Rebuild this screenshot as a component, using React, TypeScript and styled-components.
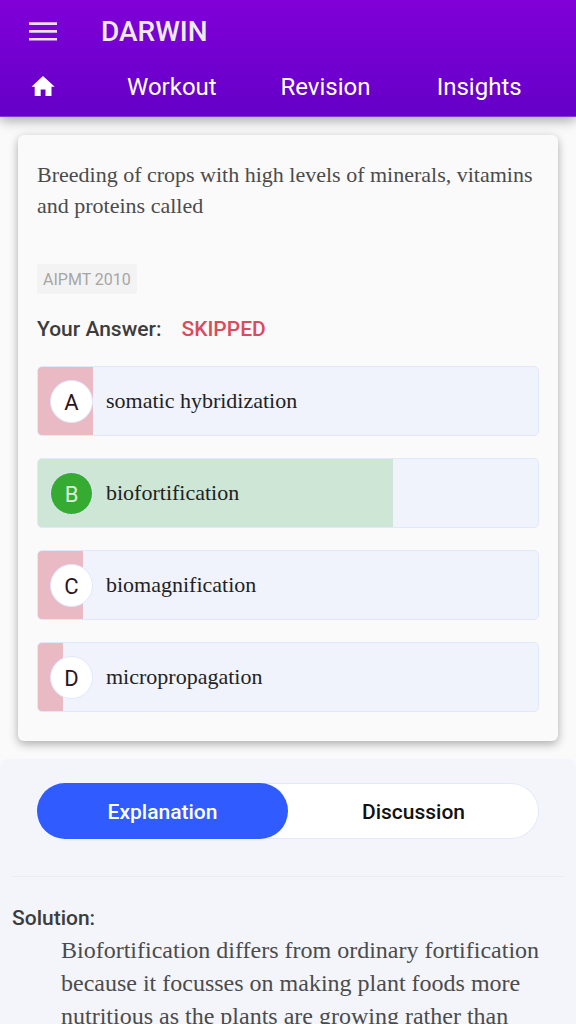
import React, { useState } from "react";
import styled, { createGlobalStyle } from "styled-components";

const GlobalStyle = createGlobalStyle`
  *, *::before, *::after { box-sizing: border-box; }
  body {
    margin: 0;
    background: #fafafa;
    color: #3c3c3c;
    font-family: Roboto, "Liberation Sans", sans-serif;
  }
  button { font-family: inherit; cursor: pointer; }
`;

const sans = `Roboto, "Liberation Sans", sans-serif`;
const serif = `"Liberation Serif", "Times New Roman", serif`;

const Shell = styled.div`
  display: flex;
  flex-direction: column;
  height: 100vh;
`;

const Header = styled.header`
  flex: none;
  z-index: 1;
  padding-bottom: 6px;
  background: linear-gradient(#8000d7, #6500c8);
  border-bottom: 1px solid #843cc9;
  box-shadow: 0 3px 12px rgba(0, 0, 0, 0.36);
`;

const TitleBar = styled.div`
  display: flex;
  align-items: center;
  gap: 43px;
  height: 64px;
  padding-left: 28px;
`;

const MenuButton = styled.button`
  display: flex;
  padding: 0;
  border: 0;
  background: none;
  color: #ecdff8;
`;

const Brand = styled.h1`
  margin: 0;
  color: #ebebeb;
  font-size: 28px;
  font-weight: 500;
  line-height: 32px;
`;

const Nav = styled.nav`
  display: grid;
  grid-template-columns: 95px repeat(3, 1fr);
  align-items: center;
  height: 46px;
  padding-right: 20px;
`;

const NavLink = styled.a`
  color: #fff;
  font-size: 24px;
  line-height: 32px;
  text-align: center;
  text-decoration: none;
`;

const HomeLink = styled(NavLink)`
  display: flex;
  padding: 0 0 2px 28px;
`;

const Main = styled.main`
  flex: 1;
  min-height: 0;
  overflow-y: auto;
  scrollbar-width: none;
`;

const Card = styled.section`
  margin: 18px;
  padding: 24px 19px 29px;
  background: #fafafa;
  border-radius: 6px;
  box-shadow: 0 3px 10px rgba(0, 0, 0, 0.32);
`;

const Question = styled.p`
  margin: 0;
  color: #4b4b4b;
  font-family: ${serif};
  font-size: 22px;
  line-height: 31px;
`;

const ExamTag = styled.span`
  display: inline-block;
  margin-top: 43px;
  padding: 1px 6px 0;
  background: #f3f3f3;
  border-radius: 3px;
  color: #a6a6a6;
  font-size: 16px;
  line-height: 29px;
  vertical-align: top;
`;

const AnswerLine = styled.p`
  display: flex;
  gap: 20px;
  margin: 22px 0 24px;
  color: #3c3c3c;
  font-size: 21px;
  font-weight: 500;
  line-height: 26px;
`;

const AnswerStatus = styled.span`
  color: #dc4a5e;
`;

const OptionList = styled.div`
  display: grid;
  gap: 22px;
`;

const Option = styled.button<{ $share: number; $correct?: boolean }>`
  display: flex;
  align-items: center;
  gap: 13px;
  width: 100%;
  height: 70px;
  padding: 0 12px;
  border: 1px solid #e1e8fd;
  border-radius: 5px;
  background: ${({ $share, $correct }) => {
    const fill = $correct ? "#cde6d6" : "#e9b9c4";
    return `linear-gradient(to right, ${fill} ${$share}%, #f0f3fb ${$share}%)`;
  }};
  color: #222;
  font-family: ${serif};
  font-size: 22px;
  text-align: left;
`;

const Letter = styled.span<{ $correct?: boolean }>`
  display: flex;
  align-items: center;
  justify-content: center;
  flex: none;
  width: 43px;
  height: 43px;
  padding-top: 2px;
  border: 1px solid #e1e8fd;
  border-radius: 50%;
  background: ${({ $correct }) => ($correct ? "#36ab31" : "#fff")};
  color: ${({ $correct }) => ($correct ? "#d9f0dc" : "#2c1520")};
  font-family: ${sans};
  font-size: 22px;
`;

const Panel = styled.section`
  min-height: 264px;
  padding: 24px 12px;
  background: #f3f5fb;
  border-radius: 8px 8px 0 0;
`;

const Tabs = styled.div`
  display: grid;
  grid-template-columns: 1fr 1fr;
  margin: 0 25px;
  border-radius: 28px;
  background: #fff;
  box-shadow: inset 0 0 0 1px #e1e8fd;
`;

const Tab = styled.button<{ $active: boolean }>`
  height: 56px;
  padding: 1px 0 0;
  border: 0;
  border-radius: 28px;
  background: ${({ $active }) => ($active ? "#2f5bff" : "transparent")};
  color: ${({ $active }) => ($active ? "#fff" : "#111")};
  font-size: 21px;
  font-weight: 500;
`;

const Divider = styled.hr`
  height: 1px;
  margin: 37px 0 27px;
  border: 0;
  background: #ececee;
`;

const SolutionTitle = styled.h2`
  margin: 0;
  color: #3c3c3c;
  font-size: 21px;
  font-weight: 500;
  line-height: 28px;
`;

const SolutionText = styled.p`
  margin: 2px 0 0;
  padding: 0 20px 0 49px;
  color: #4b4b4b;
  font-family: ${serif};
  font-size: 24px;
  line-height: 33px;
`;

const options = [
  { letter: "A", text: "somatic hybridization", share: 11, correct: false },
  { letter: "B", text: "biofortification", share: 71, correct: true },
  { letter: "C", text: "biomagnification", share: 9, correct: false },
  { letter: "D", text: "micropropagation", share: 5, correct: false },
];

const MenuIcon = () => (
  <svg width="30" height="20" viewBox="0 0 30 20" fill="currentColor" aria-hidden="true">
    <path d="M1 0.3h28v2.6H1zM1 8h28v2.8H1zM1 16h28v2.6H1z" />
  </svg>
);

const HomeIcon = () => (
  <svg width="30" height="24" viewBox="0 0 30 24" fill="currentColor" aria-hidden="true">
    <path d="M15 2L3.5 12.8h3.2V22h6v-6.6h4.8V22h6v-9.2h3.2z" />
  </svg>
);

export default function App() {
  const [tab, setTab] = useState("Explanation");

  return (
    <Shell>
      <GlobalStyle />
      <Header>
        <TitleBar>
          <MenuButton type="button" aria-label="Menu">
            <MenuIcon />
          </MenuButton>
          <Brand>DARWIN</Brand>
        </TitleBar>
        <Nav>
          <HomeLink href="#home" aria-label="Home">
            <HomeIcon />
          </HomeLink>
          <NavLink href="#workout">Workout</NavLink>
          <NavLink href="#revision">Revision</NavLink>
          <NavLink href="#insights">Insights</NavLink>
        </Nav>
      </Header>
      <Main>
        <Card>
          <Question>
            Breeding of crops with high levels of minerals, vitamins and proteins called
          </Question>
          <ExamTag>AIPMT 2010</ExamTag>
          <AnswerLine>
            <span>Your Answer:</span>
            <AnswerStatus>SKIPPED</AnswerStatus>
          </AnswerLine>
          <OptionList>
            {options.map((o) => (
              <Option key={o.letter} type="button" $share={o.share} $correct={o.correct}>
                <Letter $correct={o.correct}>{o.letter}</Letter>
                <span>{o.text}</span>
              </Option>
            ))}
          </OptionList>
        </Card>
        <Panel>
          <Tabs role="tablist">
            {["Explanation", "Discussion"].map((name) => (
              <Tab
                key={name}
                type="button"
                role="tab"
                aria-selected={tab === name}
                $active={tab === name}
                onClick={() => setTab(name)}
              >
                {name}
              </Tab>
            ))}
          </Tabs>
          <Divider />
          <SolutionTitle>Solution:</SolutionTitle>
          <SolutionText>
            Biofortification differs from ordinary fortification because it focusses on making
            plant foods more nutritious as the plants are growing rather than
          </SolutionText>
        </Panel>
      </Main>
    </Shell>
  );
}
